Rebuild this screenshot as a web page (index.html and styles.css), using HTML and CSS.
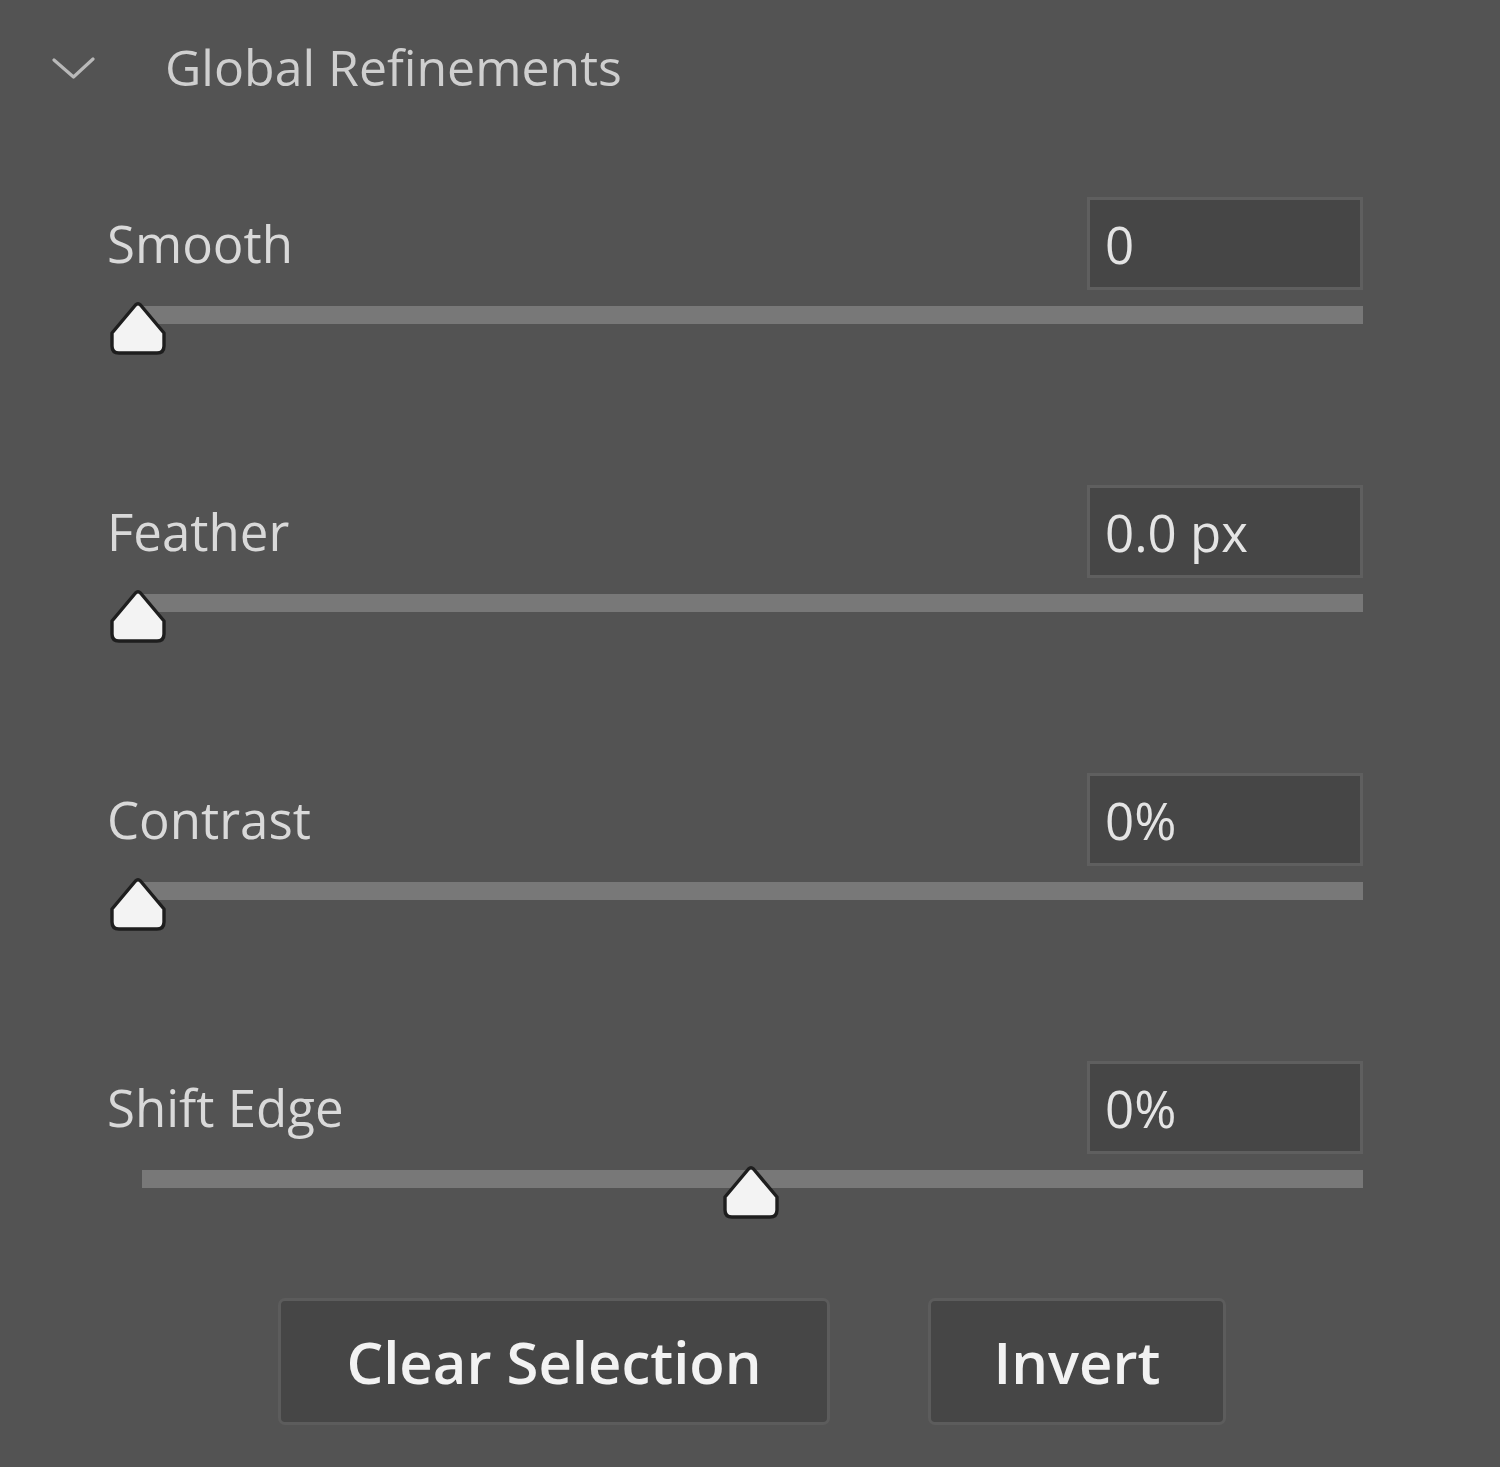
FILE: index.html
```html
<!DOCTYPE html>
<html lang="en">
<head>
<meta charset="utf-8">
<title>Global Refinements</title>
<link rel="stylesheet" href="styles.css">
</head>
<body>
<div class="panel">
  <div class="header">
    <svg class="chev" width="43" height="26" viewBox="0 0 43 26"><path d="M2 4 L21.5 21 L41 3" fill="none" stroke="#b9b9b9" stroke-width="3.2" stroke-linecap="round" stroke-linejoin="round"/></svg>
    <span class="title">Global Refinements</span>
  </div>
  <div class="rows">
    <div class="row">
      <div class="row-top"><span class="label">Smooth</span><div class="field">0</div></div>
      <div class="slider"><div class="track"></div><svg class="thumb" style="left:0%" width="60" height="57" viewBox="0 0 60 57"><path d="M27.5 5 Q30 2.5 32.5 5 L56 33 L56 46 Q56 53 49 53 L11 53 Q4 53 4 46 L4 33 Z" fill="#f3f3f3" stroke="#1e1e1e" stroke-width="3.4" stroke-linejoin="round"/></svg></div>
    </div>
    <div class="row">
      <div class="row-top"><span class="label">Feather</span><div class="field">0.0 px</div></div>
      <div class="slider"><div class="track"></div><svg class="thumb" style="left:0%" width="60" height="57" viewBox="0 0 60 57"><path d="M27.5 5 Q30 2.5 32.5 5 L56 33 L56 46 Q56 53 49 53 L11 53 Q4 53 4 46 L4 33 Z" fill="#f3f3f3" stroke="#1e1e1e" stroke-width="3.4" stroke-linejoin="round"/></svg></div>
    </div>
    <div class="row">
      <div class="row-top"><span class="label">Contrast</span><div class="field">0%</div></div>
      <div class="slider"><div class="track"></div><svg class="thumb" style="left:0%" width="60" height="57" viewBox="0 0 60 57"><path d="M27.5 5 Q30 2.5 32.5 5 L56 33 L56 46 Q56 53 49 53 L11 53 Q4 53 4 46 L4 33 Z" fill="#f3f3f3" stroke="#1e1e1e" stroke-width="3.4" stroke-linejoin="round"/></svg></div>
    </div>
    <div class="row">
      <div class="row-top"><span class="label">Shift Edge</span><div class="field">0%</div></div>
      <div class="slider"><div class="track"></div><svg class="thumb" style="left:50%" width="60" height="57" viewBox="0 0 60 57"><path d="M27.5 5 Q30 2.5 32.5 5 L56 33 L56 46 Q56 53 49 53 L11 53 Q4 53 4 46 L4 33 Z" fill="#f3f3f3" stroke="#1e1e1e" stroke-width="3.4" stroke-linejoin="round"/></svg></div>
    </div>
  </div>
  <div class="actions">
    <button class="btn btn-clear">Clear Selection</button>
    <button class="btn btn-invert">Invert</button>
  </div>
</div>
</body>
</html>
```

FILE: styles.css
```css
html, body {
  margin: 0;
  padding: 0;
  background: #535353;
}
.panel {
  width: 1500px;
  height: 1467px;
  background: #535353;
  font-family: "Open Sans", "Noto Sans", sans-serif;
  color: #d6d6d6;
  box-sizing: border-box;
  overflow: hidden;
}
.header {
  display: flex;
  align-items: center;
  height: 134px;
  padding-left: 52px;
}
.chev {
  display: block;
  margin-right: 70px;
  margin-top: 4px;
}
.title {
  font-size: 50px;
  color: #cfcfcf;
  line-height: 1;
}
.rows {
  display: flex;
  flex-direction: column;
  gap: 161px;
  padding: 63px 137px 0 107px;
}
.row-top {
  display: flex;
  justify-content: space-between;
  align-items: center;
  height: 93px;
}
.label {
  font-size: 51px;
  line-height: 1;
  color: #d9d9d9;
}
.field {
  width: 276px;
  height: 93px;
  box-sizing: border-box;
  background: #464646;
  border: 3px solid #5f5f5f;
  padding-left: 15px;
  display: flex;
  align-items: center;
  font-size: 51px;
  color: #e4e4e4;
}
.slider {
  position: relative;
  height: 18px;
  margin-top: 16px;
  margin-left: 31px;
}
.track {
  height: 18px;
  margin-left: 4px;
  background: #787878;
}
.thumb {
  position: absolute;
  top: -6px;
  transform: translateX(-50%);
  display: block;
}
.actions {
  display: flex;
  gap: 98px;
  padding-left: 278px;
  margin-top: 110px;
}
.btn {
  height: 127px;
  box-sizing: border-box;
  background: #464646;
  border: 3px solid #5c5c5c;
  border-radius: 7px;
  font-family: "Open Sans", "Noto Sans", sans-serif;
  font-size: 58px;
  font-weight: 600;
  color: #f2f2f2;
  padding: 0;
}
.btn-clear { width: 552px; }
.btn-invert { width: 298px; }
```
